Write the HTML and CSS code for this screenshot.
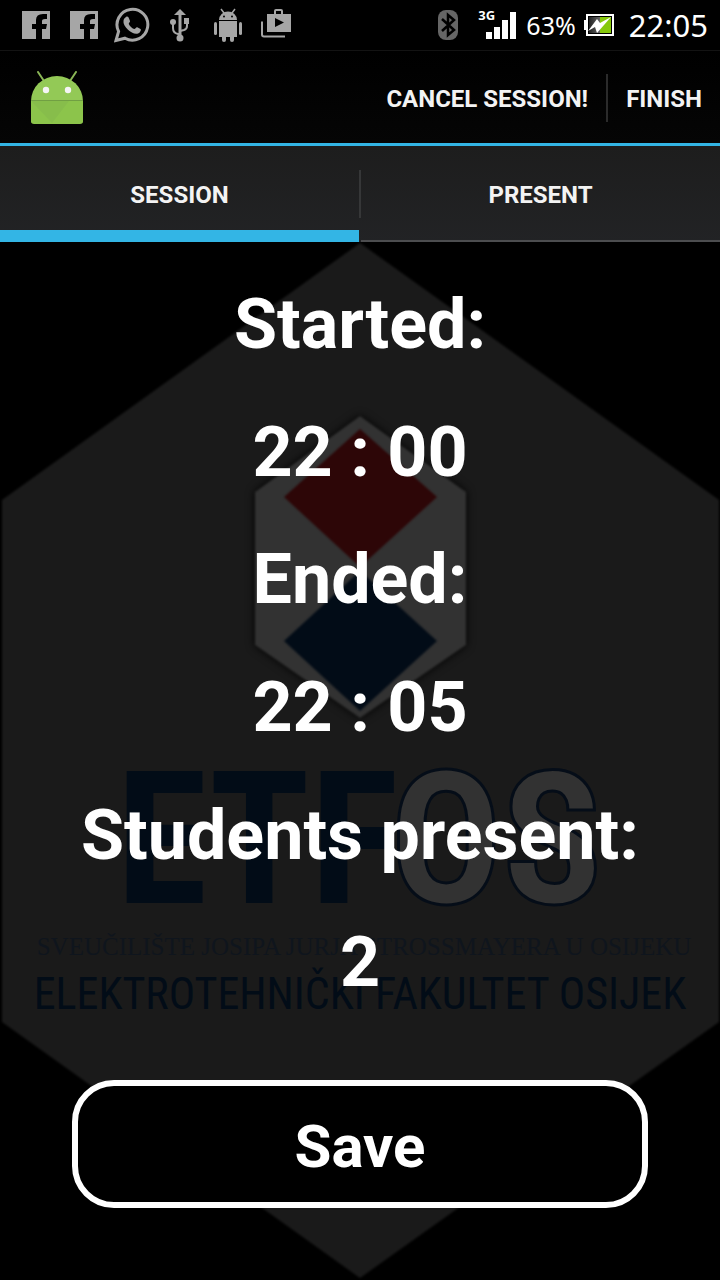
FILE: index.html
```html
<!DOCTYPE html>
<html lang="en">
<head>
<meta charset="utf-8">
<meta name="viewport" content="width=device-width, initial-scale=1">
<title>Session</title>
<link rel="stylesheet" href="styles.css">
</head>
<body>
<div class="screen">
  <div class="status-bar">
    <div class="notifications">
      <svg class="icon" viewBox="0 0 36 36" aria-label="Facebook"><path fill="#a6a6a6" d="M4 4h28v28h-8V22h4l1-5h-5v-3q0-2 3-2h2V7h-4q-7 0-7 6v4h-4v5h4v10H4z"/></svg>
      <svg class="icon" viewBox="0 0 36 36" aria-label="Facebook"><path fill="#a6a6a6" d="M4 4h28v28h-8V22h4l1-5h-5v-3q0-2 3-2h2V7h-4q-7 0-7 6v4h-4v5h4v10H4z"/></svg>
      <svg class="icon" viewBox="0 0 36 36" aria-label="WhatsApp"><path fill="none" stroke="#a6a6a6" stroke-width="3" d="M2 33.500l2.600-9A15.400 15.400 0 1 1 11 31.200z"/><path fill="#a6a6a6" d="M12 10c1.500-1 2.500 0 3 1.500l1 2.500c.4 1-1.600 2-1.200 3 1.200 2.500 3 4 5.300 5 1 .4 2-2.200 3.200-1.700l3.200 1.700c1 .7-.3 3.500-2 4.300-3 1.500-7.500-.5-10.500-3.500s-5-6-4.500-9c.2-1.700 1.200-3 2.500-3.800z"/></svg>
      <svg class="icon" viewBox="0 0 36 36" aria-label="USB"><g fill="none" stroke="#a6a6a6" stroke-width="2"><path stroke-width="3" d="M18 31V6"/><path d="M18 27h-2q-5-1-5-6v-6M18 24l4-1q3-1 3-4v-4"/></g><g fill="#a6a6a6"><path d="M18 2l6 6H12z"/><circle cx="18" cy="31" r="3.500"/><circle cx="11" cy="15" r="3"/><path d="M22 11h5v6h-5z"/></g></svg>
      <svg class="icon" viewBox="0 0 36 36" aria-label="Debugging"><g fill="#a6a6a6"><path d="M9 13a9 8.500 0 0 1 18 0z"/><path d="M9 14h18v16H9z"/><rect x="4" y="15" width="3" height="13" rx="1.500"/><rect x="29" y="15" width="3" height="13" rx="1.500"/><rect x="12" y="27" width="4" height="8" rx="2"/><rect x="20" y="27" width="4" height="8" rx="2"/></g><path stroke="#a6a6a6" stroke-width="1.500" d="M11 2l3 4M25 2l-3 4"/><circle cx="14" cy="9.500" r="1" fill="#000"/><circle cx="22" cy="9.500" r="1" fill="#000"/></svg>
      <svg class="icon" viewBox="0 0 36 36" aria-label="Store"><path fill="#a6a6a6" fill-rule="evenodd" d="M9 7h24v18H9zM17 11v9l9-4.500z"/><path fill="none" stroke="#a6a6a6" stroke-width="2" d="M4 14.500v13q0 2 2 2h21M17 7V4q0-1 1-1h5q1 0 1 1v3"/></svg>
    </div>
    <div class="indicators">
      <svg class="bluetooth" viewBox="0 0 20 32" aria-label="Bluetooth"><rect y="1" width="20" height="30" rx="8" fill="#666"/><path fill="none" stroke="#000" stroke-width="2.500" d="M4 10l12 11-6 5V6l6 5L4 22"/></svg>
      <div class="signal">
        <span class="network">3G</span>
        <svg class="bars" viewBox="0 0 30 28" aria-label="Signal"><path fill="#fff" d="M0 21h6v7H0zM8 16h6v12H8zM16 9h6v19h-6zM24 1h6v27h-6z"/></svg>
      </div>
      <span class="charge">63%</span>
      <svg class="battery" viewBox="0 0 30 24" aria-label="Battery charging"><defs><linearGradient id="dark"><stop stop-color="#222"/><stop offset="1" stop-color="#666"/></linearGradient></defs><path fill="#fff" d="M0 7h2V1h28v22H2v-6H0z"/><path fill="#000" d="M4 3h24v18H4z"/><path fill="url(#dark)" d="M5 4h11v16H5z"/><path fill="#86c80b" d="M16 4h11v16H16z"/><path fill="#fff" d="M4 18L13 6l3 4 11-6-14 16-2-6z"/></svg>
      <time class="clock">22:05</time>
    </div>
  </div>

  <header class="action-bar">
    <svg class="app-icon" viewBox="0 0 52 54" aria-label="App"><path stroke="#8ab556" stroke-width="2" stroke-linecap="round" d="M7 1l6 9M45 1l-6 9"/><path fill="#93c956" d="M0 30a26 25 0 0 1 52 0v20q0 2-2 2H2q-2 0-2-2z"/><path fill="#8cc44b" d="M0 30h52v20q0 3-3 3H3q-3 0-3-3z"/><path fill="#7fb34a" d="M0 30h38L21 52z" opacity=".4"/><path fill="#719f43" d="M0 29h52v1H0z"/><circle cx="15" cy="19" r="3.200" fill="#f5f5f5"/><circle cx="37" cy="19" r="3.200" fill="#f5f5f5"/></svg>
    <div class="actions">
      <button class="action" type="button">CANCEL SESSION!</button>
      <button class="action" type="button">FINISH</button>
    </div>
  </header>

  <nav class="tabs">
    <button class="tab tab-active" type="button">SESSION</button>
    <span class="tab-divider"></span>
    <button class="tab" type="button">PRESENT</button>
  </nav>

  <main class="content">
    <svg class="backdrop" viewBox="0 0 720 1038" aria-hidden="true">
      <defs>
        <filter id="shade" x="-20%" y="-20%" width="140%" height="140%" color-interpolation-filters="sRGB"><feGaussianBlur stdDeviation="1"/><feDropShadow dx="0" dy="0" stdDeviation="4" flood-color="#000"/></filter>
        <filter id="soft" color-interpolation-filters="sRGB"><feGaussianBlur stdDeviation="1"/></filter>
      </defs>
      <path fill="#1a1a1a" filter="url(#soft)" d="M360 1l359 257v522L360 1036 2 780V258z"/>
      <path fill="#323232" filter="url(#shade)" d="M360 174l106 76v153l-106 73-105-73V250z"/>
      <g filter="url(#soft)">
        <path fill="#2d0607" d="M360 187l77 68-77 70-76-70z"/>
        <path fill="#020c17" d="M360 329l77 70-77 70-76-70z"/>
      </g>
      <text class="mark-solid" x="116" y="661">ETF</text>
      <text class="mark-outline" x="390" y="661">OS</text>
      <text class="mark-university" x="364" y="713">SVEUČILIŠTE JOSIPA JURJA STROSSMAYERA U OSIJEKU</text>
      <text class="mark-faculty" x="360" y="767">ELEKTROTEHNIČKI FAKULTET OSIJEK</text>
    </svg>
    <div class="summary">
      <p class="line">Started:</p>
      <p class="line">22 : 00</p>
      <p class="line">Ended:</p>
      <p class="line">22 : 05</p>
      <p class="line">Students present:</p>
      <p class="line">2</p>
    </div>
    <button class="save" type="button">Save</button>
  </main>
</div>
</body>
</html>
```
FILE: styles.css
```css
* { box-sizing: border-box; }

body {
  margin: 0;
  background: #000;
  color: #fff;
  font-family: Roboto, "Liberation Sans", sans-serif;
}

button {
  margin: 0;
  border: 0;
  background: none;
  color: inherit;
  font-family: inherit;
  font-weight: 700;
}

.screen {
  display: flex;
  flex-direction: column;
  min-height: 100vh;
}

.status-bar {
  display: flex;
  align-items: center;
  justify-content: space-between;
  height: 51px;
  padding: 0 12px 0 18px;
  border-bottom: 1px solid #131313;
  font-family: "Noto Sans", "Open Sans", sans-serif;
}

.notifications { display: flex; gap: 12px; }
.icon { width: 36px; height: 36px; }

.indicators { display: flex; align-items: center; }
.bluetooth { width: 20px; height: 32px; margin-right: 20px; }
.signal { display: flex; align-items: flex-start; }
.network { width: 8px; font-size: 13px; font-weight: 700; line-height: 8px; }
.bars { width: 30px; height: 28px; }
.charge { margin-left: 10px; font-size: 25px; }
.battery { width: 30px; height: 24px; margin-left: 8px; }
.clock { margin-left: 15px; font-size: 31px; }

.action-bar {
  display: flex;
  align-items: center;
  justify-content: space-between;
  height: 95px;
  padding: 2px 0 0 31px;
  border-bottom: 3px solid #33b5e5;
  background: linear-gradient(#000, #050505);
}

.app-icon { width: 52px; height: 54px; }
.actions { display: flex; align-items: center; }

.action {
  height: 48px;
  padding: 2px 18px 0;
  color: #f3f3f3;
  font-size: 24px;
  line-height: 46px;
}

.action + .action { border-left: 2px solid #2b2b2b; }

.tabs {
  display: flex;
  align-items: center;
  height: 96px;
  background: linear-gradient(#1d1d1d, #222325);
}

.tab {
  flex: 1;
  height: 96px;
  padding: 2px 0 0;
  box-shadow: inset 0 -2px #4c4d4f;
  color: #f3f3f3;
  font-size: 24px;
}

.tab-active { box-shadow: inset 0 -12px #33b5e5; }
.tab-divider { width: 2px; height: 48px; background: #363738; }

.content {
  position: relative;
  display: flex;
  flex: 1;
  flex-direction: column;
  gap: 54px;
  padding: 18px 10% 72px;
}

.backdrop {
  position: absolute;
  inset: 0;
  width: 100%;
  height: 100%;
}

.mark-solid,
.mark-outline {
  font-family: "Roboto Condensed", "Liberation Sans Narrow", "Liberation Sans", sans-serif;
  font-size: 186px;
  font-weight: 700;
}

.mark-solid { fill: #020c17; }
.mark-outline { fill: #323232; stroke: #050d18; stroke-width: 3px; }

.mark-university {
  fill: #0f151d;
  font-family: "Liberation Serif", serif;
  font-size: 25px;
  text-anchor: middle;
}

.mark-faculty {
  fill: #020c17;
  font-family: "Roboto Condensed", "Liberation Sans Narrow", "Liberation Sans", sans-serif;
  font-size: 44px;
  text-anchor: middle;
}

.summary {
  position: relative;
  display: flex;
  flex: 1;
  flex-direction: column;
}

.line {
  display: flex;
  flex: 1;
  align-items: center;
  justify-content: center;
  margin: 0;
  font-size: 70px;
  font-weight: 700;
  line-height: 84px;
  white-space: pre;
}

.save {
  position: relative;
  height: 128px;
  padding: 4px 0 0;
  border: 6px solid #fff;
  border-radius: 42px;
  background: #000;
  font-size: 60px;
}
```
